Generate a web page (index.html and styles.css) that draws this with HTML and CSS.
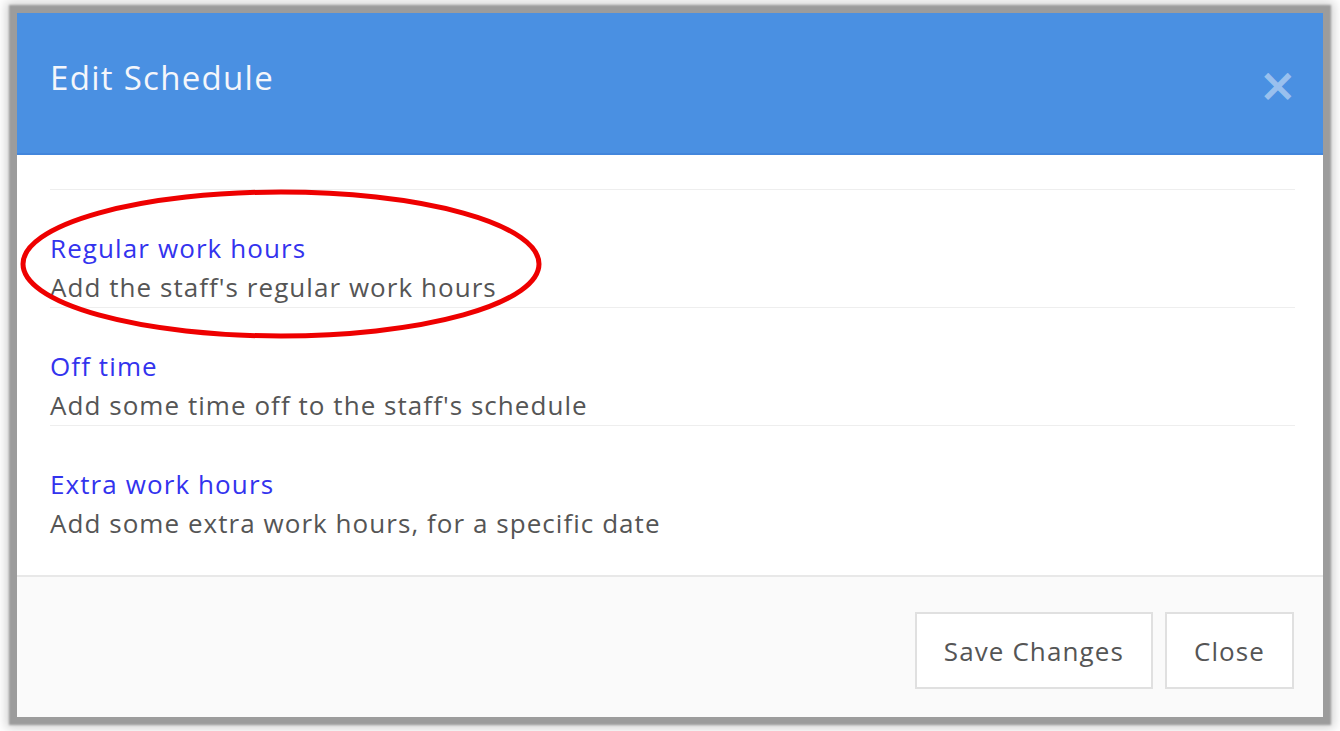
FILE: index.html
```html
<!DOCTYPE html>
<html>
<head>
<meta charset="utf-8">
<link rel="stylesheet" href="styles.css">
</head>
<body>
<div class="modal">
  <div class="modal-header">
    <h1 class="modal-title">Edit Schedule</h1>
    <span class="close-x">&times;</span>
  </div>
  <div class="modal-body">
    <div class="option">
      <a class="option-title">Regular work hours</a>
      <div class="option-desc">Add the staff's regular work hours</div>
    </div>
    <div class="option">
      <a class="option-title">Off time</a>
      <div class="option-desc">Add some time off to the staff's schedule</div>
    </div>
    <div class="option last">
      <a class="option-title">Extra work hours</a>
      <div class="option-desc">Add some extra work hours, for a specific date</div>
    </div>
  </div>
  <div class="modal-footer">
    <button class="btn">Save Changes</button>
    <button class="btn">Close</button>
  </div>
</div>
<svg class="annotation" width="1340" height="731" viewBox="0 0 1340 731">
  <ellipse cx="281" cy="264" rx="258" ry="72" fill="none" stroke="#ee0000" stroke-width="5"/>
</svg>
</body>
</html>
```
FILE: styles.css
```css
html, body {
  margin: 0;
  padding: 0;
  background: #ffffff;
  font-family: "Open Sans", "Noto Sans", sans-serif;
}
body {
  width: 1340px;
  height: 731px;
  overflow: hidden;
  position: relative;
  padding-top: 13px;
  box-sizing: border-box;
}
.modal {
  margin-left: 17px;
  width: 1306px;
  height: 704px;
  background: #fff;
  box-shadow: 0 0 2px 8px #9c9c9c, 0 0 10px 11px rgba(0,0,0,0.18);
  display: flex;
  flex-direction: column;
}
.modal-header {
  height: 140px;
  background: #4a90e2;
  border-bottom: 2px solid #4286dc;
  display: flex;
  align-items: flex-start;
  justify-content: space-between;
  padding: 0 26px 0 33px;
}
.modal-title {
  margin: 43px 0 0 0;
  font-weight: 400;
  font-size: 33px;
  letter-spacing: 1.3px;
  line-height: 44px;
  color: #f4f6fb;
}
.close-x {
  margin-top: 44px;
  font-size: 46px;
  line-height: 56px;
  font-weight: 700;
  color: rgba(255,255,255,0.45);
  font-family: "DejaVu Sans", sans-serif;
}
.modal-body {
  flex: 1;
  padding: 34px 28px 0 33px;
  border-bottom: 2px solid #e8e8e8;
}
.option {
  border-top: 1px solid #eeeeee;
  padding-top: 39px;
}
.option-title {
  display: block;
  color: #3333ee;
  font-size: 26px;
  letter-spacing: 1.1px;
  line-height: 39px;
}
.option-desc {
  color: #555555;
  font-size: 26px;
  letter-spacing: 1.05px;
  line-height: 39px;
}
.modal-footer {
  height: 140px;
  background: #fafafa;
  display: flex;
  justify-content: flex-end;
  align-items: flex-start;
  gap: 12px;
  padding: 35px 29px 0 0;
  box-sizing: border-box;
}
.btn {
  height: 77px;
  background: #ffffff;
  border: 2px solid #e0e0e0;
  color: #555555;
  font-family: "Open Sans", sans-serif;
  font-size: 26px;
  letter-spacing: 1.1px;
  padding: 0 27px;
}
.annotation {
  position: absolute;
  left: 0;
  top: 0;
  pointer-events: none;
}
```
